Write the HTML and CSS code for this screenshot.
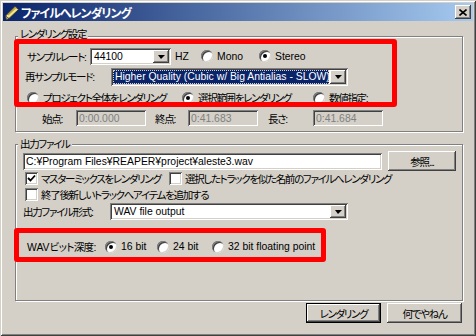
FILE: index.html
```html
<!DOCTYPE html>
<html lang="ja">
<head>
    <meta charset="UTF-8">
    <title>ファイルへレンダリング</title>
    <link rel="stylesheet" href="styles.css">
</head>
<body>
    <div class="window">
        <div class="titlebar">
            <svg class="title-icon" width="16" height="16" viewBox="0 0 16 16">
                <path d="M2.5 15.5 L1.5 12 L11 2.5 L14.5 5.5 L5 14.5 Z" fill="#f3e38a" stroke="#3b3a2c" stroke-width="1"/>
                <path d="M4 11 L12 3.5" stroke="#b9a23a" stroke-width="1.2"/>
                <path d="M1.5 12 L2.5 15.5 L5 14.5 Z" fill="#e8d9b0" stroke="#3b3a2c" stroke-width="0.8"/>
            </svg>
            <span class="title-text">ファイルへレンダリング</span>
            <span class="close-btn">
                <svg width="8" height="7" viewBox="0 0 8 7">
                    <path d="M0.5 0.5 L7.5 6.5 M7.5 0.5 L0.5 6.5" stroke="#000" stroke-width="1.6"/>
                </svg>
            </span>
        </div>

        <div class="content">
            <!-- render settings -->
            <div class="group group-render">
                <span class="group-label">レンダリング設定</span>

                <div class="row row-rate">
                    <span class="lbl w-rate">サンプルレート:</span>
                    <div class="field combo w-rate-combo">
                        <span class="combo-text en">44100</span>
                        <span class="combo-btn"></span>
                    </div>
                    <span class="lbl en w-hz">HZ</span>
                    <label class="opt w-mono"><span class="radio"></span><span class="en">Mono</span></label>
                    <label class="opt"><span class="radio on"></span><span class="en">Stereo</span></label>
                </div>

                <div class="row row-mode">
                    <span class="lbl w-mode">再サンプルモード:</span>
                    <div class="field combo w-mode-combo">
                        <span class="combo-text en sel">Higher Quality (Cubic w/ Big Antialias - SLOW)</span>
                        <span class="combo-btn"></span>
                    </div>
                </div>

                <div class="row row-range">
                    <label class="opt w-project"><span class="radio"></span>プロジェクト全体をレンダリング</label>
                    <label class="opt w-selection"><span class="radio on"></span>選択範囲をレンダリング</label>
                    <label class="opt"><span class="radio"></span>数値指定:</label>
                </div>

                <div class="row row-time">
                    <span class="lbl w-start">始点:</span>
                    <div class="field disabled en w-time">0:00.000</div>
                    <span class="lbl w-end">終点:</span>
                    <div class="field disabled en w-time">0:41.683</div>
                    <span class="lbl w-len">長さ:</span>
                    <div class="field disabled en w-time">0:41.684</div>
                </div>
            </div>

            <!-- output file -->
            <div class="group group-output">
                <span class="group-label">出力ファイル</span>

                <div class="row row-path">
                    <div class="field en w-path">C:¥Program Files¥REAPER¥project¥aleste3.wav</div>
                    <span class="btn btn-browse">参照...</span>
                </div>

                <div class="row row-check1">
                    <label class="opt w-master"><span class="check on"><svg width="9" height="9" viewBox="0 0 9 9"><path d="M1 4 L3.5 6.5 L8 1.5" fill="none" stroke="#000" stroke-width="1.8"/></svg></span>マスターミックスをレンダリング</label>
                    <label class="opt"><span class="check"></span>選択したトラックを似た名前のファイルへレンダリング</label>
                </div>

                <div class="row row-check2">
                    <label class="opt"><span class="check"></span>終了後新しいトラックへアイテムを追加する</label>
                </div>

                <div class="row row-format">
                    <span class="lbl w-format">出力ファイル形式:</span>
                    <div class="field combo w-format-combo">
                        <span class="combo-text en">WAV file output</span>
                        <span class="combo-btn"></span>
                    </div>
                </div>

                <div class="row row-depth">
                    <span class="lbl w-depth"><span class="en">WAV</span>ビット深度:</span>
                    <label class="opt w-16"><span class="radio on"></span><span class="en">16 bit</span></label>
                    <label class="opt w-24"><span class="radio"></span><span class="en">24 bit</span></label>
                    <label class="opt"><span class="radio"></span><span class="en">32 bit floating point</span></label>
                </div>
            </div>

            <div class="actions">
                <span class="btn btn-action btn-default">レンダリング</span>
                <span class="btn btn-action">何でやねん</span>
            </div>
        </div>

        <!-- red annotation boxes -->
        <div class="mark mark-rate"></div>
        <div class="mark mark-depth"></div>
    </div>
</body>
</html>
```

FILE: styles.css
```css
* {
    margin: 0;
    padding: 0;
    box-sizing: border-box;
}

body {
    font-family: "Liberation Sans", "Noto Sans CJK JP", sans-serif;
    font-size: 10.5px;
    letter-spacing: -1.3px;
    color: #000;
    font-feature-settings: "palt";
    background: #fff;
}

/* latin runs are narrower in the original dialog font */
.en {
    font-size: 10.4px;
    letter-spacing: 0;
}

.window {
    position: relative;
    width: 476px;
    height: 336px;
    padding: 3px;
    background: #d4d0c8;
    box-shadow: inset 1px 1px 0 #d4d0c8, inset -1px -1px 0 #404040,
                inset 2px 2px 0 #fff, inset -2px -2px 0 #808080;
}

/* title bar */
.titlebar {
    height: 18px;
    display: flex;
    align-items: center;
    background: linear-gradient(to right, #0a246a, #a6caf0);
}

.title-icon {
    margin-left: 1px;
}

.title-text {
    margin-left: 1px;
    color: #fff;
    font-weight: bold;
    font-size: 12px;
    letter-spacing: -1px;
}

.close-btn {
    margin-left: auto;
    margin-right: 2px;
    width: 16px;
    height: 14px;
    display: flex;
    align-items: center;
    justify-content: center;
    background: #d4d0c8;
    box-shadow: inset -1px -1px 0 #404040, inset 1px 1px 0 #fff,
                inset -2px -2px 0 #808080;
}

/* body */
.content {
    padding: 0 10px 0 12px;
}

.group {
    position: relative;
    border: 1px solid #808080;
    box-shadow: inset 1px 1px 0 #fff, 1px 1px 0 #fff;
}

.group-label {
    position: absolute;
    top: -8px;
    left: 2px;
    padding: 0 2px;
    line-height: 14px;
    background: #d4d0c8;
}

.group-render .group-label {
    top: -10px;
}

.group-render {
    margin-top: 15px;
    height: 96px;
    padding: 9px 0 0 8px;
}

.group-output {
    margin-top: 12px;
    height: 157px;
    padding: 6px 0 0 7px;
}

.row {
    display: flex;
    align-items: center;
    white-space: nowrap;
}

.row-rate { height: 20px; margin-left: 3px; }
.row-mode { height: 21px; margin-left: 1px; }
.row-range { height: 21px; margin-left: 3px; }
.row-time { height: 20px; margin-left: 18px; }

.row-path { height: 20px; }
.row-check1 { height: 15px; margin-left: 2px; }
.row-check2 { height: 16px; margin-left: 2px; }
.row-format { height: 19px; }
.row-depth { height: 19px; margin-top: 16px; margin-left: 4px; }

.lbl {
    flex: none;
}

.w-rate { width: 63px; }
.w-hz { width: 30px; padding-left: 4px; }
.w-mono { width: 58px; }
.w-mode { width: 86px; }
.w-project { width: 155px; }
.w-selection { width: 131px; }
.w-start { width: 34px; }
.w-end { width: 33px; margin-left: 9px; }
.w-len { width: 45px; margin-left: 10px; }
.w-master { width: 144px; }
.w-format { width: 87px; }
.w-depth { width: 78px; letter-spacing: -0.6px; }
.w-16 { width: 52px; }
.w-24 { width: 55px; }

/* sunken fields */
.field {
    flex: none;
    height: 17px;
    display: flex;
    align-items: center;
    padding: 0 3px;
    background: #fff;
    box-shadow: inset 1px 1px 0 #808080, inset -1px -1px 0 #fff,
                inset 2px 2px 0 #404040, inset -2px -2px 0 #d4d0c8;
}

.field.disabled {
    height: 16px;
    background: #d4d0c8;
    color: #808080;
}

.w-rate-combo { width: 81px; }
.w-mode-combo { width: 237px; height: 18px; }
.w-time { width: 70px; }
.w-path { width: 359px; }
.w-format-combo { width: 238px; }

.combo {
    padding: 2px;
    align-items: stretch;
}

.combo-text {
    flex: 1;
    display: flex;
    align-items: center;
    padding-left: 2px;
    overflow: hidden;
}

.combo-text.sel {
    background: #0a246a;
    color: #fff;
    outline: 1px dotted #d4d0c8;
    outline-offset: -1px;
}

.combo-btn {
    flex: none;
    width: 16px;
    margin-left: 1px;
    display: flex;
    align-items: center;
    justify-content: center;
    background: #d4d0c8;
    box-shadow: inset -1px -1px 0 #404040, inset 1px 1px 0 #fff,
                inset -2px -2px 0 #808080;
}

.combo-btn::after {
    content: "";
    border-left: 3px solid transparent;
    border-right: 4px solid transparent;
    border-top: 4px solid #000;
    margin-top: 1px;
}

/* radios and checkboxes */
.opt {
    flex: none;
    display: flex;
    align-items: center;
}

.radio {
    flex: none;
    position: relative;
    width: 12px;
    height: 12px;
    margin-right: 4px;
    border-radius: 50%;
    background: #fff;
    box-shadow: inset 1px 1px 0 #808080, inset -1px -1px 0 #d4d0c8,
                inset 2px 2px 0 #404040;
}

.radio.on::after {
    content: "";
    position: absolute;
    left: 4px;
    top: 4px;
    width: 4px;
    height: 4px;
    border-radius: 50%;
    background: #000;
}

.check {
    flex: none;
    width: 13px;
    height: 13px;
    margin-right: 3px;
    display: flex;
    align-items: center;
    justify-content: center;
    background: #fff;
    box-shadow: inset 1px 1px 0 #808080, inset -1px -1px 0 #fff,
                inset 2px 2px 0 #404040, inset -2px -2px 0 #d4d0c8;
}

/* push buttons */
.btn {
    flex: none;
    height: 20px;
    display: flex;
    align-items: center;
    justify-content: center;
    background: #d4d0c8;
    box-shadow: inset -1px -1px 0 #404040, inset 1px 1px 0 #fff,
                inset -2px -2px 0 #808080;
}

.btn-browse {
    width: 68px;
    margin-left: 6px;
}

.actions {
    display: flex;
    justify-content: flex-end;
    gap: 6px;
    margin-top: 2px;
    padding-right: 1px;
}

.btn-action {
    width: 75px;
}

.btn-default {
    border: 1px solid #000;
}

/* red annotation boxes */
.mark {
    position: absolute;
    border: 5px solid #f00;
    border-radius: 3px;
}

.mark-rate {
    left: 14px;
    top: 39px;
    width: 383px;
    height: 68px;
}

.mark-depth {
    left: 14px;
    top: 228px;
    width: 312px;
    height: 34px;
}
```
